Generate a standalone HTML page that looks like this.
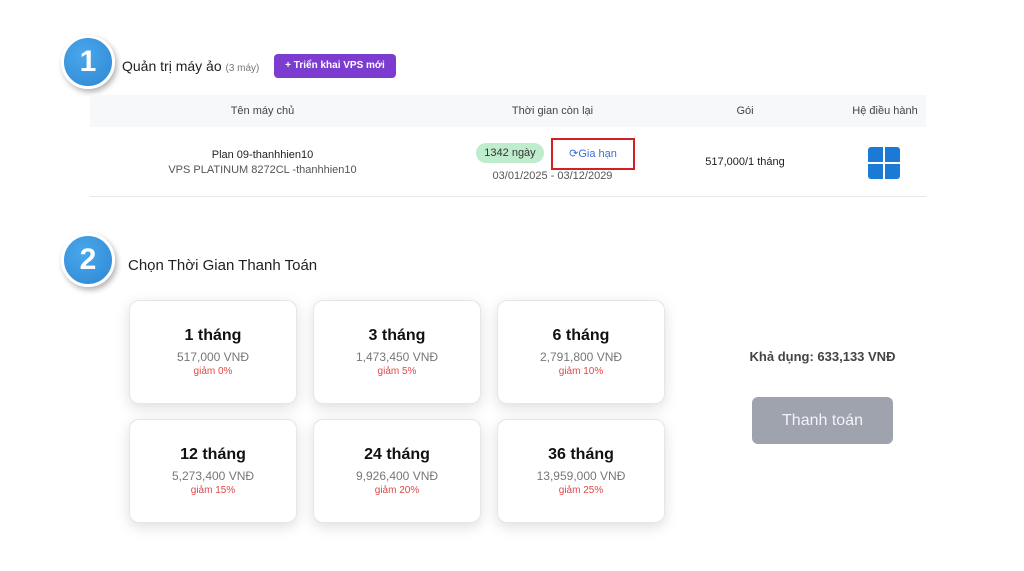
<!DOCTYPE html><html><head><meta charset="utf-8"><style>
body{margin:0;width:1024px;height:571px;background:#fff;font-family:"Liberation Sans",sans-serif;position:relative;overflow:hidden;color:#222}
.a{position:absolute}
.circ{position:absolute;width:48px;height:48px;border-radius:50%;background:radial-gradient(circle at 40% 35%,#4aa8ec,#2d86d2);border:3px solid #fff;box-shadow:2px 3px 6px rgba(0,0,0,.3);color:#fff;font-weight:bold;font-size:30px;text-align:center;line-height:48px;font-family:"Liberation Sans Narrow","Liberation Sans",sans-serif}
.card{position:absolute;width:166px;height:102px;border:1px solid #e6e6e6;border-radius:10px;box-shadow:0 4px 14px rgba(0,0,0,.13);text-align:center;background:#fff}
.card b{display:block;margin-top:26px;font-size:16px;color:#111}
.card .p{font-size:12px;color:#777;margin-top:5px}
.card .d{font-size:10px;color:#e04848;margin-top:2px}
.c{position:absolute;text-align:center;font-size:11px;color:#444}
</style></head><body>
<div class="circ" style="left:61px;top:35px">1</div>
<div class="a" style="left:122px;top:58px;font-size:14px;color:#222">Quản trị máy ảo <span style="font-size:10px;color:#777">(3 máy)</span></div>
<div class="a" style="left:274px;top:54px;width:122px;height:24px;background:#7b3ccf;border-radius:4px;color:#fff;font-size:10px;font-weight:bold;text-align:center;line-height:24px">+ Triển khai VPS mới</div>
<div class="a" style="left:90px;top:95px;width:836px;height:32px;background:#f7f8fa"></div>
<div class="a" style="left:90px;top:196px;width:836px;height:1px;background:#e8e8e8"></div>
<div class="c" style="left:180px;top:105px;width:165px">Tên máy chủ</div>
<div class="c" style="left:470px;top:105px;width:165px">Thời gian còn lại</div>
<div class="c" style="left:700px;top:105px;width:90px">Gói</div>
<div class="c" style="left:825px;top:105px;width:120px">Hệ điều hành</div>
<div class="c" style="left:170px;top:149px;width:185px;color:#222">Plan 09-thanhhien10</div>
<div class="c" style="left:150px;top:164px;width:225px;color:#555">VPS PLATINUM 8272CL -thanhhien10</div>
<div class="a" style="left:476px;top:143px;width:68px;height:20px;background:#bfeccd;border-radius:10px;font-size:11px;text-align:center;line-height:20px;color:#333">1342 ngày</div>
<div class="a" style="left:551px;top:138px;width:80px;height:28px;border:2px solid #d42020;font-size:11px;color:#3a6fd6;text-align:center;line-height:28px">⟳Gia hạn</div>
<div class="c" style="left:470px;top:170px;width:165px;color:#555">03/01/2025 - 03/12/2029</div>
<div class="c" style="left:690px;top:156px;width:110px;color:#222">517,000/1 tháng</div>
<div class="a" style="left:868px;top:147px;width:32px;height:32px;display:grid;grid-template-columns:1fr 1fr;gap:2px">
<div style="background:#1a7ad6;border-radius:3px 0 0 0"></div><div style="background:#1a7ad6;border-radius:0 3px 0 0"></div><div style="background:#1a7ad6;border-radius:0 0 0 3px"></div><div style="background:#1a7ad6;border-radius:0 0 3px 0"></div></div>
<div class="circ" style="left:61px;top:233px">2</div>
<div class="a" style="left:128px;top:257px;font-size:15px;color:#222">Chọn Thời Gian Thanh Toán</div>
<div class="card" style="left:129px;top:300px"><b>1 tháng</b><div class="p">517,000 VNĐ</div><div class="d">giảm 0%</div></div>
<div class="card" style="left:313px;top:300px"><b>3 tháng</b><div class="p">1,473,450 VNĐ</div><div class="d">giảm 5%</div></div>
<div class="card" style="left:497px;top:300px"><b>6 tháng</b><div class="p">2,791,800 VNĐ</div><div class="d">giảm 10%</div></div>
<div class="card" style="left:129px;top:419px"><b>12 tháng</b><div class="p">5,273,400 VNĐ</div><div class="d">giảm 15%</div></div>
<div class="card" style="left:313px;top:419px"><b>24 tháng</b><div class="p">9,926,400 VNĐ</div><div class="d">giảm 20%</div></div>
<div class="card" style="left:497px;top:419px"><b>36 tháng</b><div class="p">13,959,000 VNĐ</div><div class="d">giảm 25%</div></div>
<div class="a" style="left:730px;top:349px;width:185px;text-align:center;font-size:13px;font-weight:bold;color:#444">Khả dụng: 633,133 VNĐ</div>
<div class="a" style="left:752px;top:397px;width:141px;height:47px;background:#9ea3ad;border-radius:6px;color:#f3f4f6;font-size:16px;text-align:center;line-height:47px">Thanh toán</div>
</body></html>
